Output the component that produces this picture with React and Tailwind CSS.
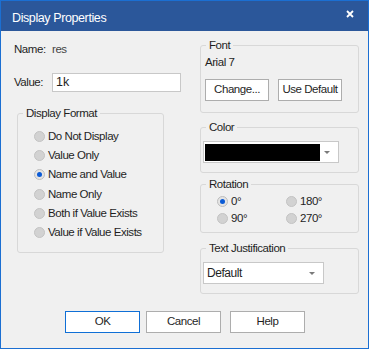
import React from 'react';

const Radio = ({ checked, label, h = 'h-[19px]' }) => (
  <div className={`flex items-center ${h}`}>
    <span className={`w-[11px] h-[11px] rounded-full border flex items-center justify-center ${checked ? 'bg-[#e4e4e4] border-[#bdbdbd]' : 'bg-[#d2d2d2] border-[#c3c3c3]'}`}>
      {checked && <span className="w-[5px] h-[5px] rounded-full bg-[#0b5bd6]"></span>}
    </span>
    <span className="ml-[3px]">{label}</span>
  </div>
);

const Group = ({ title, className, children }) => (
  <fieldset className={`border border-[#d8d8d8] rounded-[3px] ${className}`}>
    <legend className="ml-[5px] px-[3px] leading-[14px]">{title}</legend>
    {children}
  </fieldset>
);

const Arrow = () => (
  <span className="w-0 h-0 border-l-[3px] border-r-[3px] border-t-[3px] border-l-transparent border-r-transparent border-t-[#7a7a7a]"></span>
);

const Btn = ({ children, primary, className }) => (
  <button className={`h-[22px] bg-white border flex items-center justify-center ${primary ? 'border-[#0f6fd6]' : 'border-[#adadad]'} ${className}`}>
    {children}
  </button>
);

const App = () => {
  const formats = ['Do Not Display', 'Value Only', 'Name and Value', 'Name Only', 'Both if Value Exists', 'Value if Value Exists'];

  return (
    <div
      className="w-[369px] h-[349px] bg-[#f0f0f0] border border-[#1b6fd2] flex flex-col text-[11.5px] tracking-[-0.45px] text-[#1f1f1f]"
      style={{ fontFamily: '"Liberation Sans", Arial, sans-serif' }}
    >
      {/* title bar */}
      <div className="h-[30px] bg-[#2b579a] flex items-center justify-between pl-[11px] pr-[14px] pt-[4px] shrink-0">
        <span className="text-white text-[12.5px] tracking-[-0.4px]">Display Properties</span>
        <svg width="8" height="8" viewBox="0 0 8 8" className="-mt-[8px]">
          <path d="M1 1 L7 7 M7 1 L1 7" stroke="#ffffff" strokeWidth="1.8" />
        </svg>
      </div>

      <div className="flex-1 flex flex-col pl-[13px] pr-[9px]">
        <div className="flex items-start">
          {/* left column */}
          <div className="w-[167px] flex flex-col pt-[12px]">
            <div className="flex items-center h-[14px]">
              <span className="w-[38px]">Name:</span>
              <span className="text-[#444]">res</span>
            </div>
            <div className="flex items-center mt-[16px]">
              <span className="w-[38px]">Value:</span>
              <div className="w-[129px] h-[19px] bg-white border border-[#c8c8c8] flex items-center pl-[3px] text-[12.5px] tracking-normal">1k</div>
            </div>
            <Group title="Display Format" className="ml-[3px] w-[147px] mt-[14px]">
              <div className="pl-[16px] pt-[7px] pb-[10px]">
                {formats.map(f => (
                  <Radio key={f} label={f} checked={f === 'Name and Value'} h="h-[19.2px]" />
                ))}
              </div>
            </Group>
          </div>

          {/* right column */}
          <div className="w-[159px] ml-[19px] flex flex-col pt-[7px]">
            <Group title="Font">
              <div className="pl-[4px] pt-[3px] pb-[11px]">
                <div className="h-[14px] leading-[14px]">Arial 7</div>
                <div className="flex mt-[10px]">
                  <Btn className="w-[64px] h-[21px]">Change...</Btn>
                  <Btn className="w-[64px] h-[21px] ml-[9px]">Use Default</Btn>
                </div>
              </div>
            </Group>

            <Group title="Color" className="mt-[7px]">
              <div className="pl-[2px] pt-[7px] pb-[9px]">
                <div className="w-[136px] h-[22px] bg-white border border-[#c8c8c8] flex items-center pl-[1px] pr-[8px]">
                  <div className="w-[115px] h-[17px] bg-black"></div>
                  <div className="flex-1 flex justify-end"><Arrow /></div>
                </div>
              </div>
            </Group>

            <Group title="Rotation" className="mt-[4px]">
              <div className="pl-[16px] pt-[2px] pb-[5px] grid grid-cols-[69px_1fr]">
                <Radio label="0°" checked h="h-[17px]" />
                <Radio label="180°" h="h-[17px]" />
                <Radio label="90°" h="h-[17px]" />
                <Radio label="270°" h="h-[17px]" />
              </div>
            </Group>

            <Group title="Text Justification" className="mt-[8px]">
              <div className="pl-[2px] pt-[7px] pb-[9px]">
                <div className="w-[121px] h-[22px] bg-white border border-[#c8c8c8] flex items-center justify-between pl-[3px] pr-[8px] text-[12px]">
                  <span>Default</span>
                  <Arrow />
                </div>
              </div>
            </Group>
          </div>
        </div>

        {/* buttons */}
        <div className="flex mt-[17px] pl-[51px]">
          <Btn primary className="w-[75px]">OK</Btn>
          <Btn className="w-[75px] ml-[6px]">Cancel</Btn>
          <Btn className="w-[75px] ml-[9px]">Help</Btn>
        </div>
      </div>
    </div>
  );
};

export default App;
